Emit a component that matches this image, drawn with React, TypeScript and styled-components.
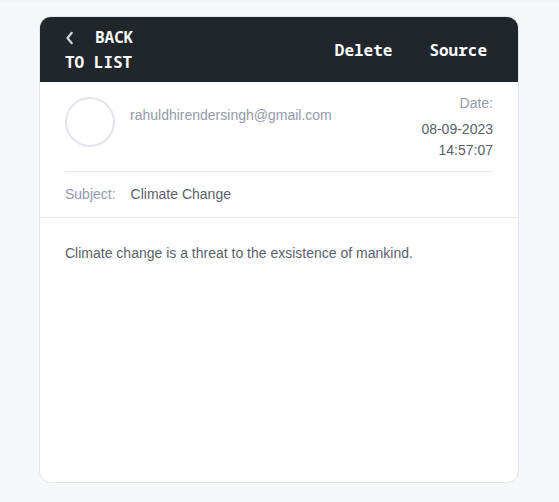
import React from "react";
import styled, { createGlobalStyle } from "styled-components";

const GlobalStyle = createGlobalStyle`
  *, *::before, *::after { box-sizing: border-box; }
  body {
    margin: 0;
    background: #f5f7f9;
    color: #5a5f6b;
    font: 14px/21px "Liberation Sans", Arial, sans-serif;
  }
`;

const Page = styled.main`
  display: flex;
  min-height: 100vh;
  padding: 16px 40px 19px 39px;
  background: linear-gradient(#f2f3f5, #f5f7f9 3px);
`;

const Card = styled.article`
  flex: 1;
  min-width: 0;
  background: #fff;
  border: 1px solid #e3e5ef;
  border-radius: 12px;
  overflow: hidden;
`;

const Toolbar = styled.header`
  display: flex;
  align-items: center;
  justify-content: space-between;
  padding: 8px 31px 7px 25px;
  background: #21252c;
`;

const Actions = styled.div`
  display: flex;
  gap: 37px;
`;

const ToolButton = styled.button`
  padding: 0;
  border: 0;
  background: none;
  color: #fff;
  font: bold 16px/25px "Noto Sans Mono", "DejaVu Sans Mono", monospace;
  text-align: left;
  cursor: pointer;
`;

const BackButton = styled(ToolButton)`
  max-width: 80px;
`;

const Chevron = styled.svg`
  width: 10px;
  height: 14px;
  margin-right: 20px;
  vertical-align: -2px;
`;

const Details = styled.section`
  padding: 0 25px;
  border-bottom: 1px solid #e8e9f0;
`;

const Sender = styled.div`
  display: flex;
  align-items: flex-start;
  padding: 15px 0 10px;
  border-bottom: 1px solid #e8e9f0;
`;

const Avatar = styled.div`
  flex: none;
  width: 50px;
  height: 50px;
  border: 2px solid #e4e3ee;
  border-radius: 50%;
`;

const Email = styled.span`
  flex: 1;
  margin: 8px 15px 0;
  color: #9499ab;
`;

const DateBlock = styled.div`
  width: 80px;
  margin-top: -4px;
  text-align: right;
`;

const Label = styled.span`
  color: #9499ab;
`;

const Value = styled.span`
  color: #5a5f6b;
`;

const Timestamp = styled.time`
  display: block;
  margin-top: 5px;
`;

const Subject = styled.div`
  display: flex;
  gap: 15px;
  padding: 12px 0;
`;

const Message = styled.p`
  margin: 0;
  padding: 25px;
`;

export default function App() {
  return (
    <>
      <GlobalStyle />
      <Page>
        <Card>
          <Toolbar>
            <BackButton type="button">
              <Chevron viewBox="0 0 10 14" aria-hidden="true">
                <path
                  d="M6.8 1.8 L2.4 7 L6.8 12.2"
                  fill="none"
                  stroke="#d4d5df"
                  strokeWidth="2.2"
                  strokeLinecap="round"
                  strokeLinejoin="round"
                />
              </Chevron>
              BACK TO LIST
            </BackButton>
            <Actions>
              <ToolButton type="button">Delete</ToolButton>
              <ToolButton type="button">Source</ToolButton>
            </Actions>
          </Toolbar>
          <Details>
            <Sender>
              <Avatar />
              <Email>rahuldhirendersingh@gmail.com</Email>
              <DateBlock>
                <Label>Date:</Label>
                <Timestamp dateTime="2023-09-08T14:57:07">08-09-2023 14:57:07</Timestamp>
              </DateBlock>
            </Sender>
            <Subject>
              <Label>Subject:</Label>
              <Value>Climate Change</Value>
            </Subject>
          </Details>
          <Message>Climate change is a threat to the exsistence of mankind.</Message>
        </Card>
      </Page>
    </>
  );
}
